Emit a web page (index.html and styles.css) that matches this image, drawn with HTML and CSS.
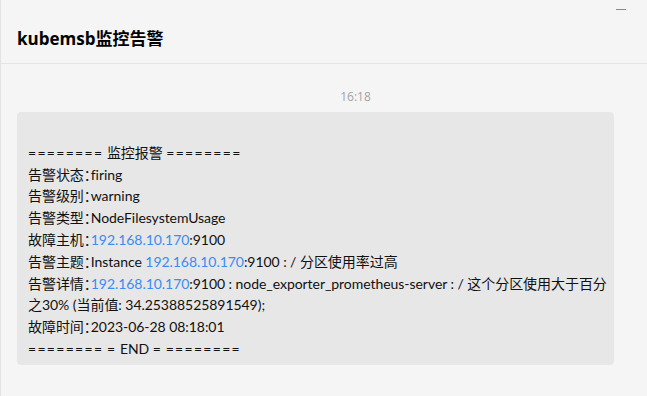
FILE: index.html
```html
<!DOCTYPE html>
<html lang="zh-CN">
<head>
  <meta charset="UTF-8" />
  <meta name="viewport" content="width=device-width, initial-scale=1.0"/>
  <title>kubemsb监控告警</title>
  <link rel="stylesheet" href="styles.css">
</head>
<body>
  <div class="window">
    <div class="titlebar">
      <h1 class="chat-title">kubemsb监控告警</h1>
      <span class="minimize"></span>
    </div>

    <div class="chat">
      <div class="time">16:18</div>
      <div class="bubble">
        <div class="msg-text">
<span class="eq">========</span> 监控报警 <span class="eq">========</span>
告警状态：firing
告警级别：warning
告警类型：NodeFilesystemUsage
故障主机：<span class="link">192.168.10.170</span>:9100
告警主题：Instance <span class="link">192.168.10.170</span>:9100 : / 分区使用率过高
告警详情：<span class="link">192.168.10.170</span>:9100 : node_exporter_prometheus-server : / 这个分区使用大于百分之30% (当前值: 34.25388525891549);
故障时间：2023-06-28 08:18:01
<span class="eq">========</span> <span class="eq">=</span> END <span class="eq">=</span> <span class="eq">========</span></div>
      </div>
    </div>
  </div>
</body>
</html>
```

FILE: styles.css
```css
body {
  margin: 0; padding: 0;
  background: #f5f5f5;
  font-family: "Open Sans", "Noto Sans CJK SC", sans-serif;
  color: #111;
  overflow: hidden;
}

.window {
  height: 100vh;
  border-left: 1px solid #e2e2e2;
  box-sizing: border-box;
}

.titlebar {
  height: 64px;
  box-sizing: border-box;
  border-bottom: 1px solid #e4e4e4;
  display: flex;
  justify-content: space-between;
  align-items: flex-start;
  padding: 0 21px 0 16px;
}

.chat-title {
  margin: 28px 0 0;
  font-size: 17px;
  line-height: 22px;
  font-weight: 700;
  color: #000;
}

.minimize {
  margin-top: 9px;
  width: 10px; height: 1px;
  background: #8a8a8a;
}

.chat {
  padding: 0 33px 0 16px;
}

.time {
  margin-top: 25px;
  padding-left: 80px;
  text-align: center;
  font-size: 12px;
  line-height: 16px;
  color: #a3a3a3;
}

.bubble {
  margin-top: 7px;
  background: #e7e7e7;
  border-radius: 4px;
  padding: 8px 0 5px 11px;
}

.msg-text {
  white-space: pre-wrap;
  font-family: "Lato", "Noto Sans CJK SC", sans-serif;
  font-size: 14px;
  line-height: 21.8px;
  letter-spacing: -0.05px;
  font-feature-settings: "halt";
}

.eq { letter-spacing: 1.3px; }

.link { color: #3a8bf2; }
```
